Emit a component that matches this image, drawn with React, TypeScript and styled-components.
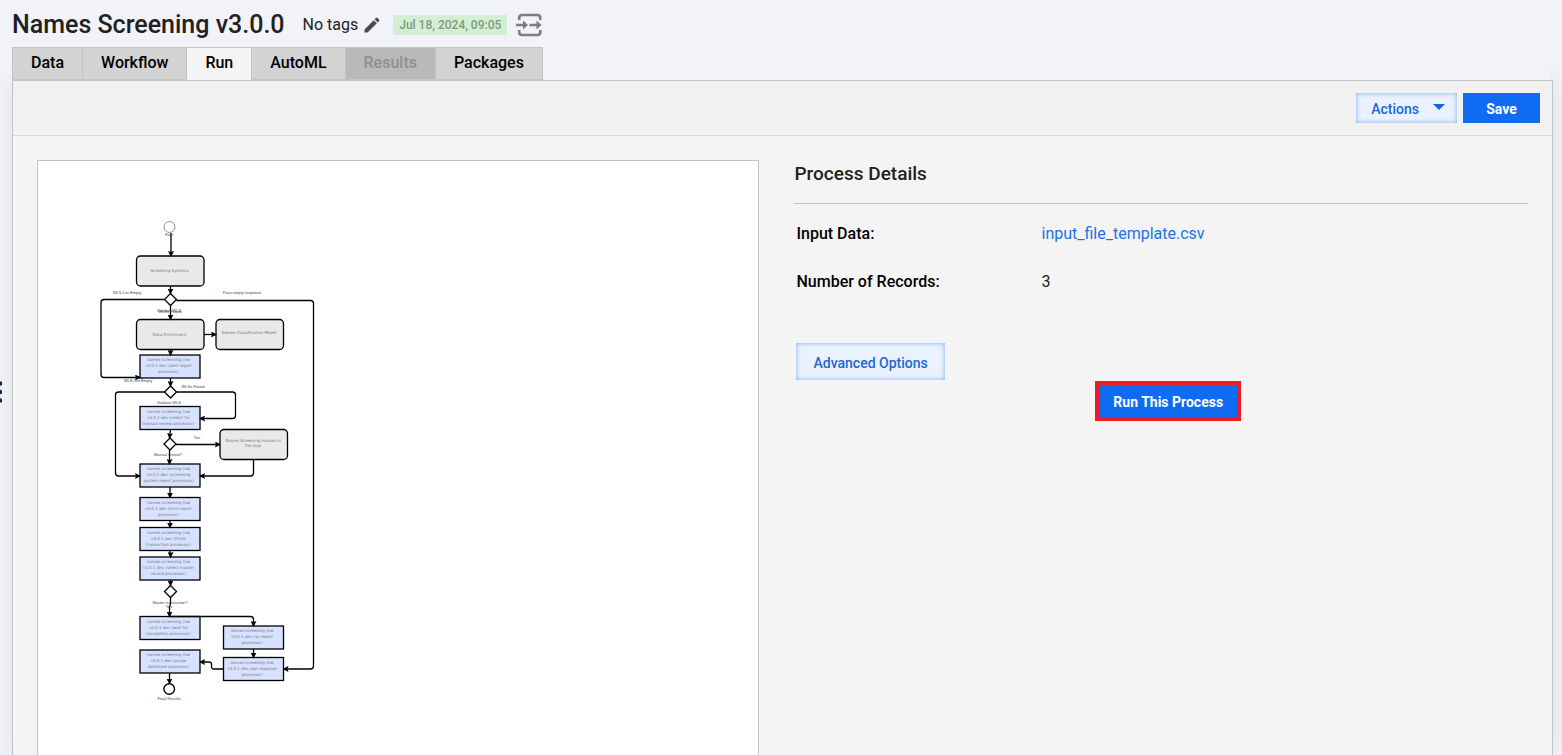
import React from 'react';
import styled, { createGlobalStyle, css } from 'styled-components';

const GlobalStyle = createGlobalStyle`
  *, *::before, *::after { box-sizing: border-box; }
  body {
    margin: 0;
    background: #f2f3f8;
    color: #212121;
    font-family: Roboto, "Liberation Sans", sans-serif;
    font-size: 16px;
    line-height: 20px;
  }
  button { font-family: inherit; cursor: pointer; }
`;

const Page = styled.div`
  display: flex;
  flex-direction: column;
  min-height: 100vh;
`;

const Header = styled.header`
  display: flex;
  align-items: center;
  height: 47px;
  padding: 2px 12px 0;
  background: #f2f3f8;
  position: relative;
  z-index: 1;
`;

const Title = styled.h1`
  margin: 0 18px 0 0;
  font-size: 25px;
  line-height: 32px;
  font-weight: 500;
`;

const Tags = styled.span`
  margin-right: 4px;
`;

const IconButton = styled.button`
  display: flex;
  padding: 0;
  border: 0;
  background: none;
  color: #4a4a4e;
`;

const DateBadge = styled.time`
  margin: 0 9px 0 11px;
  padding: 0 6px;
  background: #d3efd3;
  color: #7c9a80;
  font-size: 12px;
  font-weight: 500;
  line-height: 20px;
`;

const Tabs = styled.nav`
  display: flex;
  height: 33px;
  margin: 0 12px;
  background: #f2f3f8;
  position: relative;
  z-index: 1;
`;

const Tab = styled.button<{ $active?: boolean }>`
  padding: 0 18px 2px;
  border: 1px solid #c4c4c4;
  border-right-width: 0;
  background: #d3d3d3;
  color: #000;
  font-size: 16px;
  font-weight: 500;
  &:last-child { border-right-width: 1px; }
  &:disabled { background: #b9b9b9; color: #8f8f8f; }
  ${(p) => p.$active && css`
    background: #f4f4f4;
    border-bottom-color: #f4f4f4;
  `}
`;

const Panel = styled.main`
  flex: 1;
  display: flex;
  flex-direction: column;
  margin: 0 9px 0 12px;
  border: 1px solid #c3c3c3;
  border-bottom: 0;
  background: #f4f4f4;
  box-shadow: 0 0 20px rgba(60, 64, 80, 0.1);
`;

const Toolbar = styled.div`
  display: flex;
  justify-content: flex-end;
  gap: 6px;
  padding: 12px;
  background: #f1f1f1;
  border-bottom: 1px solid #d8d8d8;
`;

const sizes = {
  small: css`height: 30px; padding: 2px 12px 0;`,
  menu: css`height: 30px; padding: 2px 12px 0 15px;`,
  medium: css`height: 32px; padding: 2px 14px 0;`,
  large: css`height: 37px; padding: 2px 17px 0;`,
};

const Button = styled.button<{ $kind: 'primary' | 'soft'; $size?: keyof typeof sizes }>`
  display: flex;
  align-items: center;
  justify-content: center;
  gap: 14px;
  border: 0;
  font-size: 14px;
  line-height: 20px;
  ${(p) => sizes[p.$size ?? 'small']}
  ${(p) => p.$kind === 'primary'
    ? css`
        min-width: 77px;
        background: #0f6bf2;
        color: #fff;
        font-weight: 700;
      `
    : css`
        background: #ebf2ff;
        color: #1c67d6;
        font-weight: 500;
        box-shadow: inset 0 0 5px #78aaf8;
      `}
`;

const Content = styled.div`
  flex: 1;
  display: grid;
  grid-template-columns: 722fr 733fr;
  gap: 35px;
  padding: 24px 24px 0;
`;

const Canvas = styled.section`
  border: 1px solid #c3c3c3;
  border-bottom: 0;
  background: #fff;
  overflow: hidden;
  svg { display: block; }
`;

const Details = styled.section`
  display: flex;
  flex-direction: column;
  align-items: flex-start;
`;

const Heading = styled.h2`
  width: 100%;
  margin: 0;
  padding: 2px 0 17px;
  border-bottom: 1px solid #c3c3c3;
  font-size: 19px;
  line-height: 24px;
  font-weight: 500;
`;

const Facts = styled.dl`
  display: grid;
  grid-template-columns: 245px 1fr;
  row-gap: 28px;
  margin: 20px 0 51px;
  padding-left: 2px;
`;

const Term = styled.dt`
  color: #000;
  font-weight: 500;
`;

const Value = styled.dd`
  margin: 0;
`;

const FileLink = styled.a`
  color: #1a73e8;
  text-decoration: none;
`;

const AdvancedRow = styled.div`
  padding-left: 2px;
`;

const Highlight = styled.div`
  align-self: center;
  margin: 1px 0 0 14px;
  border: 4px solid #ee1b24;
`;

const DragHandle = styled.button`
  position: fixed;
  z-index: 2;
  left: -2px;
  top: 380px;
  display: flex;
  padding: 0;
  border: 0;
  background: none;
`;

const NodeText = styled.text`
  font: 4px "DejaVu Sans", sans-serif;
  fill: #77777f;
  text-anchor: middle;
`;

const EdgeText = styled(NodeText)`
  font-family: "Liberation Sans", sans-serif;
  fill: #44444c;
`;

type Step = { x: number; y: number; lines: string[] };

const models: Step[] = [
  { x: 136.5, y: 256, lines: ['Screening Systems'] },
  { x: 136.5, y: 319.5, lines: ['Data Enrichment'] },
  { x: 216, y: 319.5, lines: ['Names Classification Model'] },
  { x: 220, y: 429.5, lines: ['Names Screening Human in', 'the loop'] },
];

const processors: Step[] = [
  { x: 140, y: 355, lines: ['v3.0.1 dev (alert report', 'processor)'] },
  { x: 140, y: 406.5, lines: ['v3.0.1 dev (select for', 'manual review processor)'] },
  { x: 140, y: 464, lines: ['v3.0.1 dev (screening', 'system report processor)'] },
  { x: 140, y: 497.5, lines: ['v3.0.1 dev (html report', 'processor)'] },
  { x: 140, y: 527.5, lines: ['v3.0.1 dev (finish', 'transaction processor)'] },
  { x: 140, y: 557, lines: ['v3.0.1 dev (select master', 'record processor)'] },
  { x: 140, y: 616.5, lines: ['v3.0.1 dev (wait for', 'completion processor)'] },
  { x: 223.5, y: 626, lines: ['v3.0.1 dev (qc report', 'processor)'] },
  { x: 223.5, y: 657.5, lines: ['v3.0.1 dev (api response', 'processor)'] },
  { x: 140, y: 650, lines: ['v3.0.1 dev (purge', 'datastore processor)'] },
];

const gateways = [[170.5, 299.5], [170.5, 392], [170, 444], [170.5, 591.5]];

const edges = [
  'M171 233V256',
  'M170.5 286V293.5',
  'M164.5 299.5H104Q101 299.5 101 302.5V374.5Q101 377.5 104 377.5H140',
  'M176.5 300.5H310.5Q313.5 300.5 313.5 303.5V666Q313.5 669 310.5 669H283.5',
  'M170.5 305.5V319.5',
  'M204 334.5H216',
  'M170.5 349.5V355',
  'M170.5 378V386',
  'M164.5 392H118.5Q115.5 392 115.5 395V473Q115.5 476 118.5 476H140',
  'M176.5 392H232.5Q235.5 392 235.5 395V415.5Q235.5 418.5 232.5 418.5H200',
  'M170.5 429.5L169.5 438',
  'M176 444.5H220',
  'M169.5 450V464',
  'M253.5 459.5V473Q253.5 476 250.5 476H200',
  'M170 487V497.5',
  'M170 520.5V527.5',
  'M170 550V553.5H170.5V557',
  'M170.5 580V585.5',
  'M170.5 597.5V604L169.5 607V616.5',
  'M169.5 616.5H250.5Q253.5 616.5 253.5 619.5V626',
  'M253.5 649V657.5',
  'M223.5 669H214Q211.5 669 211.5 666.5V664Q211.5 662 209 662H200',
  'M169.5 673V683.5',
];

const labels: [number, number, string][] = [
  [169, 236, 'Start'],
  [127, 294, 'WLS List Empty'],
  [242, 294, 'Pass empty response'],
  [169, 312, 'Validate WLS'],
  [170, 313, 'WLSs Found'],
  [138, 382, 'WLS List Empty'],
  [193, 388, 'WLSs Found'],
  [169, 404, 'Validate WLS'],
  [197, 439, 'Yes'],
  [168, 456, 'Manual review?'],
  [170, 604, 'Master transaction?'],
  [169, 608, 'Yes'],
  [169, 700, 'Final Results'],
];

function Workflow() {
  return (
    <svg viewBox="38 161 300 560" width="300" height="560" role="img" aria-label="Workflow diagram">
      <defs>
        <marker id="arrow" viewBox="0 0 6 6" refX="5" refY="3" markerWidth="6" markerHeight="6" markerUnits="userSpaceOnUse" orient="auto">
          <path d="M0 0L6 3L0 6L1 3Z" />
        </marker>
      </defs>
      <circle cx="169.5" cy="227" r="5.5" fill="#fff" stroke="#777" strokeWidth="0.8" />
      <g stroke="#000" strokeWidth="1.3">
        {models.map((m) => (
          <rect key={m.lines[0]} x={m.x} y={m.y} width="67.5" height="30" rx="4" fill="#e9e9e9" />
        ))}
        {processors.map((p) => (
          <rect key={p.lines.join()} x={p.x} y={p.y} width="60" height="23" fill="#d6e2ff" />
        ))}
        {gateways.map(([x, y]) => (
          <path key={y} d={`M${x} ${y - 6}l6 6l-6 6l-6 -6Z`} fill="#fff" />
        ))}
        <circle cx="169.2" cy="689" r="5.3" fill="#fff" strokeWidth="1.4" />
        <g fill="none">
          {edges.map((d) => <path key={d} d={d} markerEnd="url(#arrow)" />)}
        </g>
      </g>
      {models.map((m) => m.lines.map((line, i) => (
        <NodeText key={line} x={m.x + 33} y={m.y + (m.x > 200 ? 14.5 : 16) - (m.lines.length > 1 ? 2 : 0) + i * 5}>{line}</NodeText>
      )))}
      {processors.map((p) => ['names-screening (nw', ...p.lines].map((line, i) => (
        <NodeText key={p.y + line} x={p.x + 28.5} y={p.y + 6 + i * 6}>{line}</NodeText>
      )))}
      {labels.map(([x, y, text]) => <EdgeText key={`${y}${text}`} x={x} y={y}>{text}</EdgeText>)}
    </svg>
  );
}

const PencilIcon = () => (
  <svg width="20" height="20" viewBox="0 0 24 24" fill="currentColor" aria-hidden="true">
    <path d="M3 17.25V21h3.75L17.81 9.94l-3.75-3.75L3 17.25zM20.71 7.04a1 1 0 0 0 0-1.41l-2.34-2.34a1 1 0 0 0-1.41 0l-1.83 1.83 3.75 3.75 1.83-1.83z" />
  </svg>
);

const TransferIcon = () => (
  <svg width="26" height="24" viewBox="0 0 26 24" fill="none" stroke="#7d7d82" strokeWidth="2.6" aria-hidden="true">
    <path d="M3.2 7V5Q3.2 2 6.2 2H21.3Q24.3 2 24.3 5V7M3.2 17V19Q3.2 22 6.2 22H21.3Q24.3 22 24.3 19V17" />
    <path d="M0 12H8M13.5 12H21" />
    <path d="M7 7.5L12 12L7 16.5ZM20.5 7.5L25.5 12L20.5 16.5Z" fill="#7d7d82" stroke="none" />
  </svg>
);

const CaretIcon = () => (
  <svg width="12" height="10" viewBox="0 0 12 10" fill="#1565d8" aria-hidden="true">
    <path d="M0 0H12L6 6Z" />
  </svg>
);

export default function App() {
  return (
    <>
      <GlobalStyle />
      <DragHandle aria-label="Resize sidebar">
        <svg width="4" height="24" viewBox="0 0 4 24" fill="#12233f" aria-hidden="true">
          <circle cx="2" cy="3.5" r="2.2" />
          <circle cx="2" cy="12" r="2.2" />
          <circle cx="2" cy="20.5" r="2.2" />
        </svg>
      </DragHandle>
      <Page>
        <Header>
          <Title>Names Screening v3.0.0</Title>
          <Tags>No tags</Tags>
          <IconButton aria-label="Edit tags"><PencilIcon /></IconButton>
          <DateBadge dateTime="2024-07-18T09:05">Jul 18, 2024, 09:05</DateBadge>
          <IconButton aria-label="Switch version"><TransferIcon /></IconButton>
        </Header>
        <Tabs>
          <Tab>Data</Tab>
          <Tab>Workflow</Tab>
          <Tab $active aria-current="page">Run</Tab>
          <Tab>AutoML</Tab>
          <Tab disabled>Results</Tab>
          <Tab>Packages</Tab>
        </Tabs>
        <Panel>
          <Toolbar>
            <Button $kind="soft" $size="menu">Actions<CaretIcon /></Button>
            <Button $kind="primary">Save</Button>
          </Toolbar>
          <Content>
            <Canvas><Workflow /></Canvas>
            <Details>
              <Heading>Process Details</Heading>
              <Facts>
                <Term>Input Data:</Term>
                <Value><FileLink href="#input">input_file_template.csv</FileLink></Value>
                <Term>Number of Records:</Term>
                <Value>3</Value>
              </Facts>
              <AdvancedRow>
                <Button $kind="soft" $size="large">Advanced Options</Button>
              </AdvancedRow>
              <Highlight>
                <Button $kind="primary" $size="medium">Run This Process</Button>
              </Highlight>
            </Details>
          </Content>
        </Panel>
      </Page>
    </>
  );
}
